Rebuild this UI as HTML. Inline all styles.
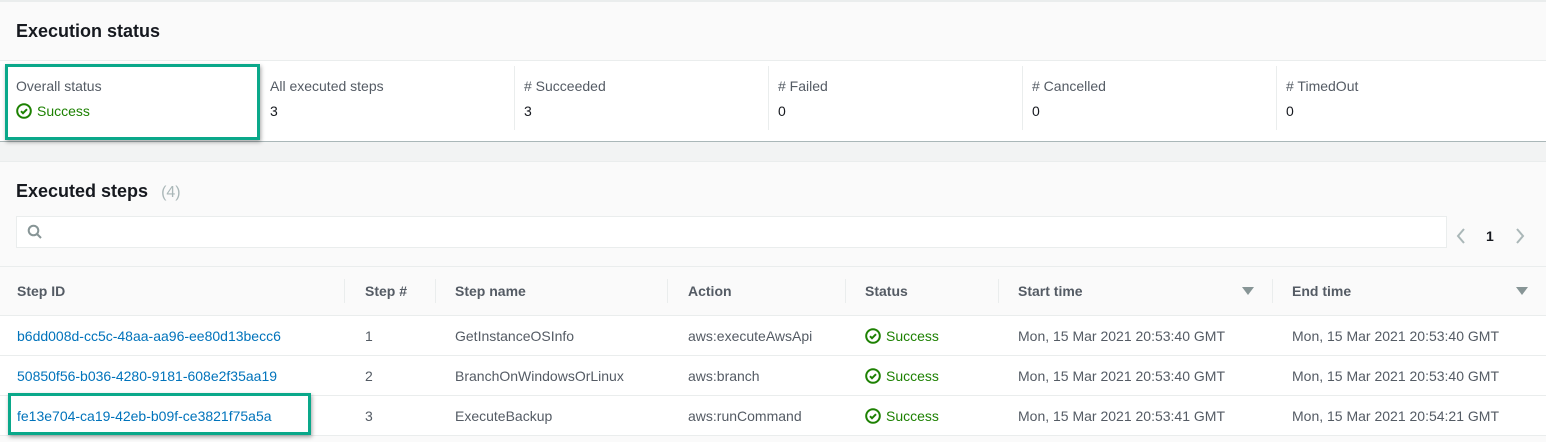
<!DOCTYPE html>
<html><head><style>
*{margin:0;padding:0;box-sizing:border-box}
body{width:1546px;height:442px;overflow:hidden;background:#f2f3f3;font-family:"Liberation Sans",sans-serif;font-size:14px;color:#16191f;position:relative}
.a{position:absolute;white-space:nowrap}
.lbl{color:#545b64}
.link{color:#0073bb}
.ok{color:#1d8102}
.g{color:#545b64}
.h{font-weight:bold;color:#545b64}
.box{position:absolute;border:3px solid #0aa88a;box-shadow:1px 2px 4px rgba(0,0,0,.35)}
.vd{position:absolute;width:1px;background:#eaeded}
.hl{position:absolute;left:0;width:1546px;height:1px;background:#eaeded}
svg.ic{position:absolute}
</style></head><body>
<div class="a" style="left:0;top:0;width:1546px;height:60px;background:#fafafa;border-top:2px solid #eaeded"></div>
<div class="a" style="left:16px;top:21px;font-size:18px;font-weight:bold">Execution status</div>
<div class="a" style="left:0;top:60px;width:1546px;height:82px;background:#fff;border-top:1px solid #eaeded;border-bottom:1px solid #aab7b8"></div>
<div class="vd" style="left:259px;top:66px;height:64px"></div>
<div class="vd" style="left:514px;top:66px;height:64px"></div>
<div class="vd" style="left:768px;top:66px;height:64px"></div>
<div class="vd" style="left:1022px;top:66px;height:64px"></div>
<div class="vd" style="left:1276px;top:66px;height:64px"></div>
<div class="a lbl" style="left:16px;top:78px">Overall status</div>
<svg class="ic" style="left:16px;top:103px" width="16" height="16" viewBox="0 0 16 16"><circle cx="8" cy="8" r="6.8" fill="none" stroke="#1d8102" stroke-width="2"/><path d="M5 8.2l2 2 4-4" fill="none" stroke="#1d8102" stroke-width="2"/></svg>
<div class="a ok" style="left:37px;top:103px">Success</div>
<div class="a lbl" style="left:270px;top:78px">All executed steps</div><div class="a" style="left:270px;top:103px">3</div>
<div class="a lbl" style="left:524px;top:78px"># Succeeded</div><div class="a" style="left:524px;top:103px">3</div>
<div class="a lbl" style="left:778px;top:78px"># Failed</div><div class="a" style="left:778px;top:103px">0</div>
<div class="a lbl" style="left:1032px;top:78px"># Cancelled</div><div class="a" style="left:1032px;top:103px">0</div>
<div class="a lbl" style="left:1286px;top:78px"># TimedOut</div><div class="a" style="left:1286px;top:103px">0</div>
<div class="box" style="left:5px;top:64px;width:255px;height:76px"></div>

<div class="a" style="left:0;top:161px;width:1546px;height:281px;background:#fafafa;border-top:1px solid #eaeded"></div>
<div class="a" style="left:16px;top:181px;font-size:18px;font-weight:bold">Executed steps <span style="font-weight:normal;color:#aab7b8;font-size:16px;margin-left:8px">(4)</span></div>
<div class="a" style="left:16px;top:216px;width:1431px;height:32px;background:#fff;border:1px solid #eaeded"></div>
<svg class="ic" style="left:27px;top:224px" width="16" height="16" viewBox="0 0 16 16"><circle cx="6.5" cy="6.5" r="4.8" fill="none" stroke="#879596" stroke-width="2"/><path d="M10 10l4 4" stroke="#879596" stroke-width="2"/></svg>
<svg class="ic" style="left:1455px;top:228px" width="12" height="16" viewBox="0 0 12 16"><path d="M9 1L3 8l6 7" fill="none" stroke="#aab7b8" stroke-width="2"/></svg>
<div class="a" style="left:1486px;top:228px;font-weight:bold">1</div>
<svg class="ic" style="left:1514px;top:228px" width="12" height="16" viewBox="0 0 12 16"><path d="M3 1l6 7-6 7" fill="none" stroke="#aab7b8" stroke-width="2"/></svg>
<div class="hl" style="top:266px"></div>
<div class="vd" style="left:344px;top:279px;height:24px"></div>
<div class="vd" style="left:435px;top:279px;height:24px"></div>
<div class="vd" style="left:667px;top:279px;height:24px"></div>
<div class="vd" style="left:845px;top:279px;height:24px"></div>
<div class="vd" style="left:998px;top:279px;height:24px"></div>
<div class="vd" style="left:1272px;top:279px;height:24px"></div>
<div class="a h" style="left:17px;top:283px">Step ID</div>
<div class="a h" style="left:365px;top:283px">Step #</div>
<div class="a h" style="left:455px;top:283px">Step name</div>
<div class="a h" style="left:688px;top:283px">Action</div>
<div class="a h" style="left:865px;top:283px">Status</div>
<div class="a h" style="left:1018px;top:283px">Start time</div>
<div class="a h" style="left:1292px;top:283px">End time</div>
<svg class="ic" style="left:1242px;top:286px" width="12" height="10"><path d="M0 1h12L6 9z" fill="#879596"/></svg>
<svg class="ic" style="left:1516px;top:286px" width="12" height="10"><path d="M0 1h12L6 9z" fill="#879596"/></svg>
<div class="a" style="left:0;top:315px;width:1546px;height:121px;background:#fff;border-top:1px solid #eaeded"></div>
<div class="hl" style="top:355px"></div><div class="hl" style="top:395px"></div><div class="hl" style="top:435px"></div>

<div class="a link" style="left:17px;top:328px">b6dd008d-cc5c-48aa-aa96-ee80d13becc6</div>
<div class="a g" style="left:365px;top:328px">1</div>
<div class="a g" style="left:455px;top:328px">GetInstanceOSInfo</div>
<div class="a g" style="left:688px;top:328px">aws:executeAwsApi</div>
<div class="a g" style="left:1018px;top:328px">Mon, 15 Mar 2021 20:53:40 GMT</div>
<div class="a g" style="left:1292px;top:328px">Mon, 15 Mar 2021 20:53:40 GMT</div>

<div class="a link" style="left:17px;top:368px">50850f56-b036-4280-9181-608e2f35aa19</div>
<div class="a g" style="left:365px;top:368px">2</div>
<div class="a g" style="left:455px;top:368px">BranchOnWindowsOrLinux</div>
<div class="a g" style="left:688px;top:368px">aws:branch</div>
<div class="a g" style="left:1018px;top:368px">Mon, 15 Mar 2021 20:53:40 GMT</div>
<div class="a g" style="left:1292px;top:368px">Mon, 15 Mar 2021 20:53:40 GMT</div>

<div class="a link" style="left:17px;top:408px">fe13e704-ca19-42eb-b09f-ce3821f75a5a</div>
<div class="a g" style="left:365px;top:408px">3</div>
<div class="a g" style="left:455px;top:408px">ExecuteBackup</div>
<div class="a g" style="left:688px;top:408px">aws:runCommand</div>
<div class="a g" style="left:1018px;top:408px">Mon, 15 Mar 2021 20:53:41 GMT</div>
<div class="a g" style="left:1292px;top:408px">Mon, 15 Mar 2021 20:54:21 GMT</div>

<svg class="ic" style="left:865px;top:328px" width="16" height="16" viewBox="0 0 16 16"><circle cx="8" cy="8" r="6.8" fill="none" stroke="#1d8102" stroke-width="2"/><path d="M5 8.2l2 2 4-4" fill="none" stroke="#1d8102" stroke-width="2"/></svg>
<div class="a ok" style="left:886px;top:328px">Success</div>
<svg class="ic" style="left:865px;top:368px" width="16" height="16" viewBox="0 0 16 16"><circle cx="8" cy="8" r="6.8" fill="none" stroke="#1d8102" stroke-width="2"/><path d="M5 8.2l2 2 4-4" fill="none" stroke="#1d8102" stroke-width="2"/></svg>
<div class="a ok" style="left:886px;top:368px">Success</div>
<svg class="ic" style="left:865px;top:408px" width="16" height="16" viewBox="0 0 16 16"><circle cx="8" cy="8" r="6.8" fill="none" stroke="#1d8102" stroke-width="2"/><path d="M5 8.2l2 2 4-4" fill="none" stroke="#1d8102" stroke-width="2"/></svg>
<div class="a ok" style="left:886px;top:408px">Success</div>

<div class="box" style="left:8px;top:393px;width:303px;height:42px"></div>
</body></html>
